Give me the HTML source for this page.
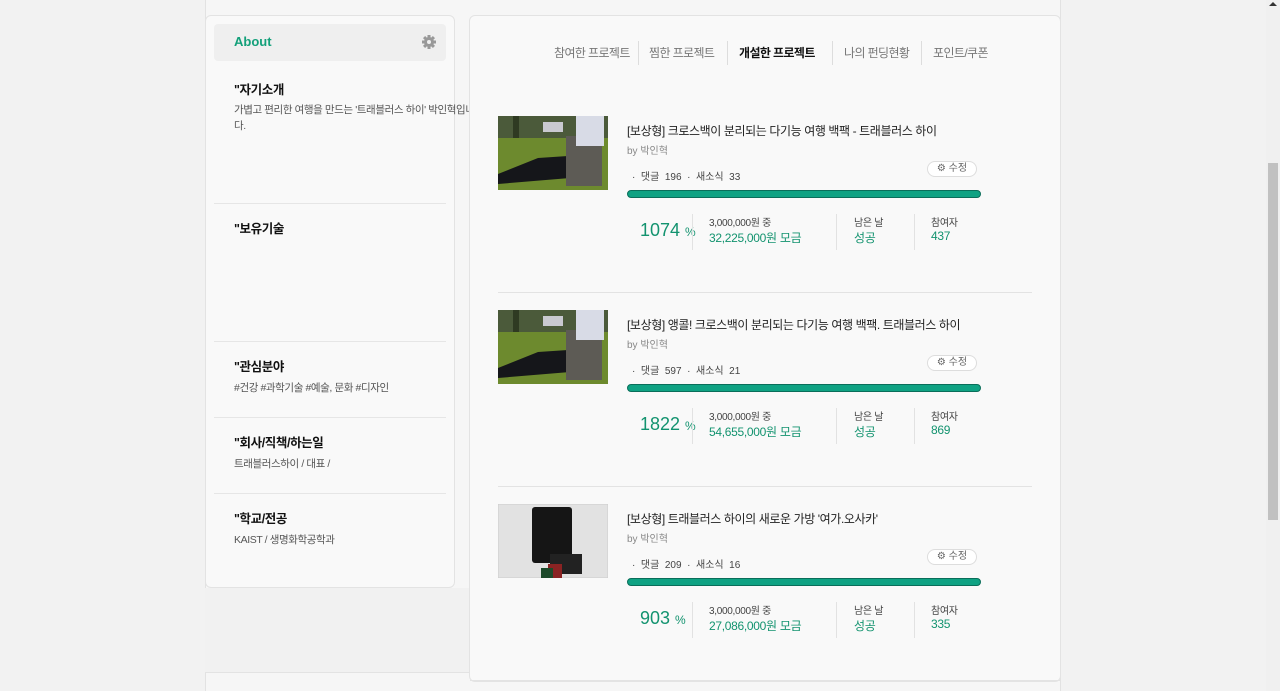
<!DOCTYPE html>
<html><head><meta charset="utf-8"><style>
*{margin:0;padding:0;box-sizing:border-box}
body{width:1280px;height:691px;overflow:hidden;background:#f2f2f2;font-family:"Liberation Sans","Noto Sans CJK KR",sans-serif;position:relative;color:#333}
.a{position:absolute;white-space:nowrap}
.wrap{position:absolute;left:205px;top:0;width:856px;height:691px;background:#f6f6f6;border-left:1px solid #e2e2e2;border-right:1px solid #e2e2e2}
.lp{position:absolute;left:205px;top:15px;width:250px;height:573px;background:#f9f9f9;border:1px solid #e3e3e3;border-radius:6px}
.lbot{position:absolute;left:205px;top:588px;width:264px;height:85px;background:#f1f1f1;border-bottom:1px solid #e3e3e3}
.rp{position:absolute;left:469px;top:15px;width:592px;height:667px;background:#f9f9f9;border:1px solid #e3e3e3;border-radius:6px}
.h{font-size:12.5px;font-weight:bold;color:#111;letter-spacing:-0.4px}
.t{font-size:10.5px;color:#555;letter-spacing:-0.4px}
.sep{position:absolute;left:214px;width:232px;height:1px;background:#e6e6e6}
.tab{font-size:12px;color:#777;top:44px;letter-spacing:-0.6px}
.tabd{position:absolute;top:41px;width:1px;height:24px;background:#ddd}
.it{position:absolute;left:498px;width:540px;height:140px}
.it>*{position:absolute;white-space:nowrap}
.img{left:0;top:0;width:110px;height:74px;overflow:hidden}
.ti{left:129px;top:6px;font-size:12px;color:#222;letter-spacing:-0.4px}
.by{left:129px;top:26px;font-size:10px;color:#888}
.cm{left:134px;top:52px;font-size:10px;color:#444}
.ed{left:429px;top:45px;width:50px;height:16px;border:1px solid #ddd;border-radius:8px;background:#fff;font-size:10px;color:#666;text-align:center;line-height:14px}
.bar{left:129px;top:74px;width:354px;height:8px;background:#0fa283;border:1px solid #0a6e5a;border-radius:4px}
.pc{left:142px;top:104px;font-size:18px;color:#13936f}
.pc span{font-size:12px}
.vd{width:1px;height:36px;top:98px;background:#e2e2e2}
.s1{font-size:10px;color:#444;letter-spacing:-0.3px}
.s2{font-size:12px;color:#13936f;letter-spacing:-0.3px}
</style></head><body>
<div class="wrap"></div>
<div class="lbot"></div>
<div class="lp"></div>
<div class="a" style="left:214px;top:24px;width:232px;height:37px;background:#efefef;border-radius:4px"></div>
<div class="a" style="left:234px;top:34px;font-size:13px;color:#13a07a;font-weight:bold">About</div>
<svg class="a" style="left:421px;top:34px" width="16" height="16" viewBox="0 0 16 16"><g fill="#999"><circle cx="8" cy="8" r="5"/><rect x="6.5" y="1" width="3" height="14"/><rect x="1" y="6.5" width="14" height="3"/><rect x="6.5" y="1" width="3" height="14" transform="rotate(45 8 8)"/><rect x="6.5" y="1" width="3" height="14" transform="rotate(-45 8 8)"/></g><circle cx="8" cy="8" r="2" fill="#efefef"/></svg>
<div class="a h" style="left:234px;top:79px">"자기소개</div>
<div class="a t" style="left:234px;top:102px">가볍고 편리한 여행을 만드는 '트래블러스 하이' 박인혁입니</div>
<div class="a t" style="left:234px;top:118px">다.</div>
<div class="sep" style="top:203px"></div>
<div class="a h" style="left:234px;top:218px">"보유기술</div>
<div class="sep" style="top:341px"></div>
<div class="a h" style="left:234px;top:356px">"관심분야</div>
<div class="a t" style="left:234px;top:380px">#건강 #과학기술 #예술, 문화 #디자인</div>
<div class="sep" style="top:417px"></div>
<div class="a h" style="left:234px;top:432px">"회사/직책/하는일</div>
<div class="a t" style="left:234px;top:456px">트래블러스하이 / 대표 /</div>
<div class="sep" style="top:493px"></div>
<div class="a h" style="left:234px;top:508px">"학교/전공</div>
<div class="a t" style="left:234px;top:532px">KAIST / 생명화학공학과</div>

<div class="rp"></div>
<div class="a tab" style="left:554px">참여한 프로젝트</div>
<div class="tabd" style="left:638px"></div>
<div class="a tab" style="left:649px">찜한 프로젝트</div>
<div class="tabd" style="left:727px"></div>
<div class="a tab" style="left:739px;color:#111;font-weight:bold">개설한 프로젝트</div>
<div class="tabd" style="left:832px"></div>
<div class="a tab" style="left:844px">나의 펀딩현황</div>
<div class="tabd" style="left:921px"></div>
<div class="a tab" style="left:933px">포인트/쿠폰</div>

<div class="a" style="left:498px;top:292px;width:534px;height:1px;background:#e3e3e3"></div>
<div class="a" style="left:498px;top:486px;width:534px;height:1px;background:#e3e3e3"></div>
<div class="a" style="left:470px;top:680px;width:590px;height:1px;background:#e3e3e3"></div>

<div class="it" style="top:116px">
 <svg class="img" viewBox="0 0 110 74"><rect width="110" height="74" fill="#6d8a2e"/><rect width="110" height="22" fill="#4b5a3a"/><rect x="15" y="0" width="6" height="22" fill="#2f3a22"/><rect x="45" y="6" width="20" height="10" fill="#c9c9d0"/><path d="M0 58 L40 42 L70 40 L72 62 L0 68Z" fill="#15161a"/><rect x="68" y="20" width="36" height="50" fill="#5d5b55"/><path d="M78 0 H106 V30 H78Z" fill="#d8dbe6"/></svg>
 <div class="ti">[보상형] 크로스백이 분리되는 다기능 여행 백팩 - 트래블러스 하이</div>
 <div class="by">by 박인혁</div>
 <div class="cm">· &nbsp;댓글 &nbsp;196 &nbsp;· &nbsp;새소식 &nbsp;33</div>
 <div class="ed">⚙ 수정</div>
 <div class="bar"></div>
 <div class="pc">1074 <span>%</span></div>
 <div class="vd" style="left:194px"></div><div class="vd" style="left:338px"></div><div class="vd" style="left:416px"></div>
 <div class="s1" style="left:211px;top:98px">3,000,000원 중</div>
 <div class="s2" style="left:211px;top:113px">32,225,000원 모금</div>
 <div class="s1" style="left:356px;top:98px">남은 날</div>
 <div class="s2" style="left:356px;top:113px">성공</div>
 <div class="s1" style="left:433px;top:98px">참여자</div>
 <div class="s2" style="left:433px;top:113px">437</div>
</div>

<div class="it" style="top:310px">
 <svg class="img" viewBox="0 0 110 74"><rect width="110" height="74" fill="#6d8a2e"/><rect width="110" height="22" fill="#4b5a3a"/><rect x="15" y="0" width="6" height="22" fill="#2f3a22"/><rect x="45" y="6" width="20" height="10" fill="#c9c9d0"/><path d="M0 58 L40 42 L70 40 L72 62 L0 68Z" fill="#15161a"/><rect x="68" y="20" width="36" height="50" fill="#5d5b55"/><path d="M78 0 H106 V30 H78Z" fill="#d8dbe6"/></svg>
 <div class="ti">[보상형] 앵콜! 크로스백이 분리되는 다기능 여행 백팩. 트래블러스 하이</div>
 <div class="by">by 박인혁</div>
 <div class="cm">· &nbsp;댓글 &nbsp;597 &nbsp;· &nbsp;새소식 &nbsp;21</div>
 <div class="ed">⚙ 수정</div>
 <div class="bar"></div>
 <div class="pc">1822 <span>%</span></div>
 <div class="vd" style="left:194px"></div><div class="vd" style="left:338px"></div><div class="vd" style="left:416px"></div>
 <div class="s1" style="left:211px;top:98px">3,000,000원 중</div>
 <div class="s2" style="left:211px;top:113px">54,655,000원 모금</div>
 <div class="s1" style="left:356px;top:98px">남은 날</div>
 <div class="s2" style="left:356px;top:113px">성공</div>
 <div class="s1" style="left:433px;top:98px">참여자</div>
 <div class="s2" style="left:433px;top:113px">869</div>
</div>

<div class="it" style="top:504px">
 <svg class="img" viewBox="0 0 110 74"><rect width="110" height="74" fill="#e2e2e2" stroke="#ccc"/><rect x="34" y="3" width="40" height="56" rx="3" fill="#151515"/><rect x="52" y="50" width="32" height="20" fill="#222"/><rect x="50" y="60" width="14" height="14" fill="#8a2323"/><rect x="43" y="64" width="12" height="10" fill="#1d4a2a"/></svg>
 <div class="ti">[보상형] 트래블러스 하이의 새로운 가방 '여가.오사카'</div>
 <div class="by">by 박인혁</div>
 <div class="cm">· &nbsp;댓글 &nbsp;209 &nbsp;· &nbsp;새소식 &nbsp;16</div>
 <div class="ed">⚙ 수정</div>
 <div class="bar"></div>
 <div class="pc">903 <span>%</span></div>
 <div class="vd" style="left:194px"></div><div class="vd" style="left:338px"></div><div class="vd" style="left:416px"></div>
 <div class="s1" style="left:211px;top:98px">3,000,000원 중</div>
 <div class="s2" style="left:211px;top:113px">27,086,000원 모금</div>
 <div class="s1" style="left:356px;top:98px">남은 날</div>
 <div class="s2" style="left:356px;top:113px">성공</div>
 <div class="s1" style="left:433px;top:98px">참여자</div>
 <div class="s2" style="left:433px;top:113px">335</div>
</div>

<div class="a" style="left:1266px;top:0;width:14px;height:691px;background:#f0f0f0"></div>
<div class="a" style="left:1268px;top:163px;width:10px;height:357px;background:#c1c1c1"></div>
<div class="a" style="left:1269px;top:2px;width:0;height:0;border-left:4px solid transparent;border-right:4px solid transparent;border-bottom:4px solid #333"></div>
</body></html>
